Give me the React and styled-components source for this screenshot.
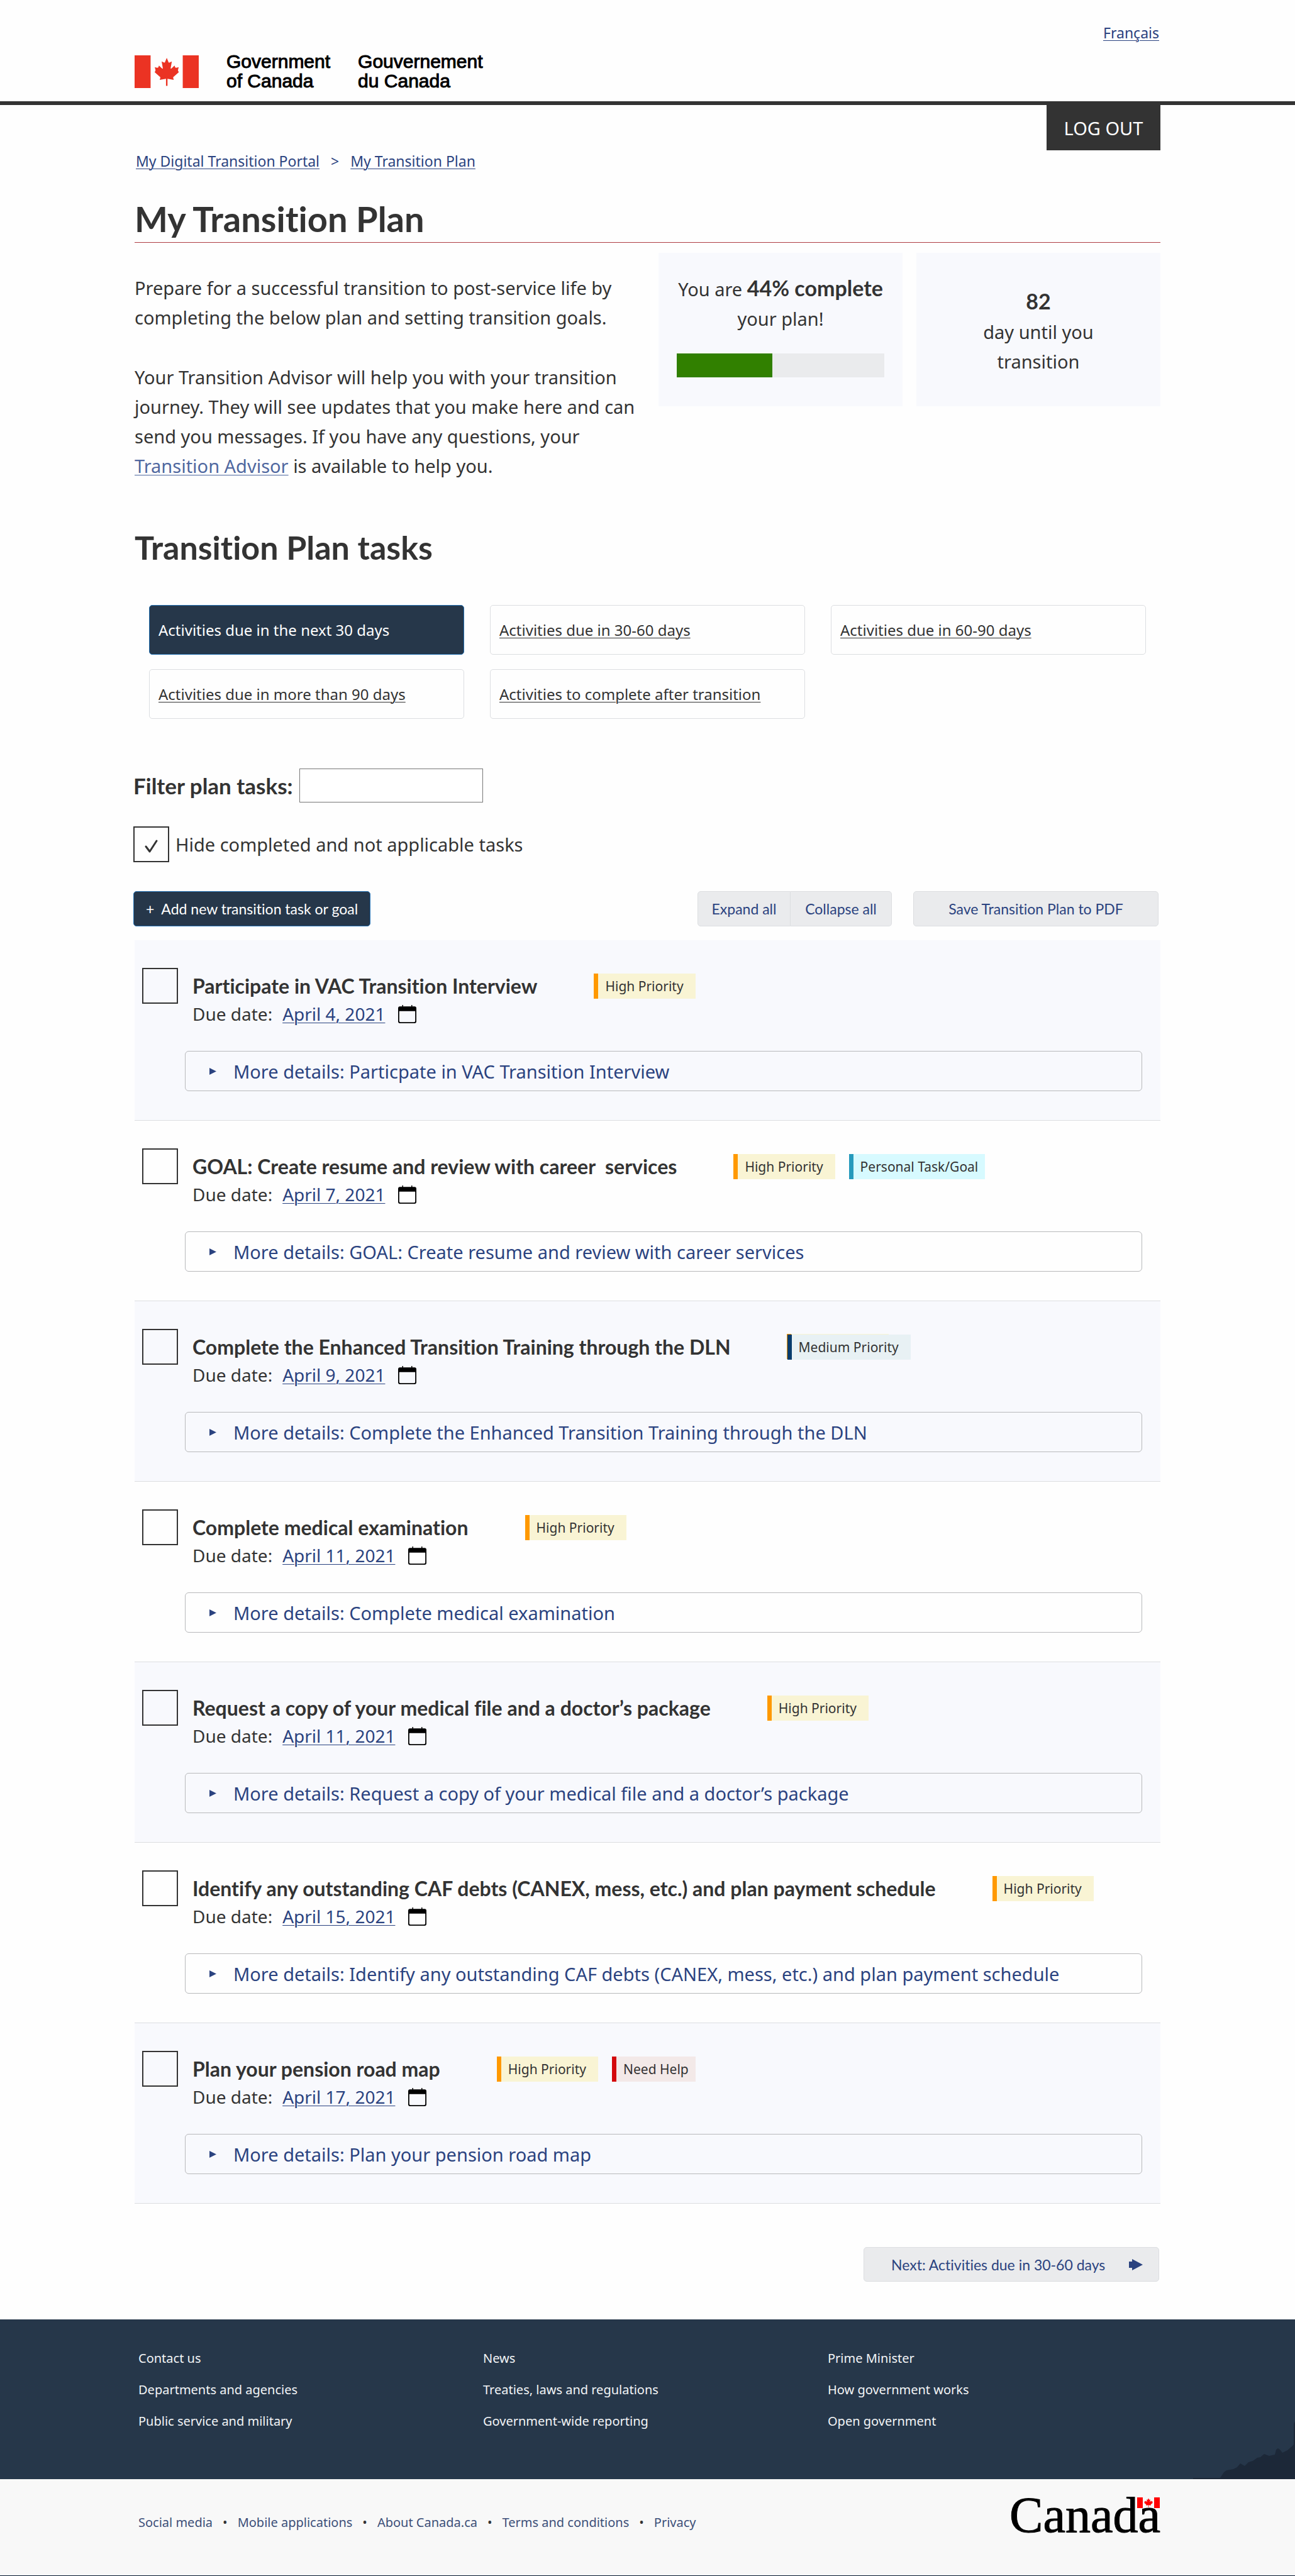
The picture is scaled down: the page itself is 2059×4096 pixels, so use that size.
import React, { useState } from "react";
import styled, { createGlobalStyle, css } from "styled-components";

const ink = "#333333";
const link = "#2b4380";
const navy = "#26374a";
const accent = "#2572b4";
const panel = "#f8f9fd";
const control = "#eaebed";
const hairline = "#dcdee1";
const body = '"Noto Sans", sans-serif';
const display = 'Lato, sans-serif';

const GlobalStyle = createGlobalStyle`
  *, *::before, *::after { box-sizing: border-box; }
  body {
    margin: 0;
    background: #fefefe;
    color: ${ink};
    font-family: ${body};
    font-size: 29px;
    font-variant-ligatures: none;
  }
  h1, h2, h3, p, ul { margin: 0; padding: 0; }
  ul { list-style: none; }
  button, input { font: inherit; color: inherit; font-variant-ligatures: none; }
  a { color: ${link}; text-decoration-thickness: 1px; text-underline-offset: 3px; }
`;

const Container = styled.div`
  width: 100%;
  max-width: 1631px;
  margin: 0 auto;
`;

/* Header */
const Masthead = styled.header`
  border-bottom: 6px solid ${ink};
`;
const MastheadInner = styled(Container)`
  display: grid;
  grid-template-rows: 88px 73px;
`;
const LanguageLink = styled.a`
  justify-self: end;
  margin: 36px 2px 0 0;
  font-size: 23px;
  line-height: 32px;
`;
const Brand = styled.div`
  display: flex;
  align-items: flex-start;
  gap: 44px;
`;
const BrandName = styled.span`
  font-family: "Liberation Sans", Arial, sans-serif;
  font-size: 30px;
  line-height: 31px;
  color: #000;
  -webkit-text-stroke: 1px #000;
  margin-top: -6px;
`;
const TopRow = styled(Container)`
  display: flex;
  justify-content: space-between;
  align-items: flex-start;
`;
const Breadcrumb = styled.nav`
  display: flex;
  gap: 18px;
  margin-top: 73px;
  padding-left: 2px;
  font-size: 23px;
  line-height: 32px;
  color: ${link};
`;
const LogOut = styled.button`
  width: 181px;
  height: 72px;
  border: 0;
  background: ${ink};
  color: #fff;
`;

/* Intro */
const PageTitle = styled.h1`
  margin-top: 41px;
  padding-bottom: 3px;
  border-bottom: 1px solid #af3c43;
  font-family: ${display};
  font-size: 56px;
  line-height: 69px;
`;
const Intro = styled.section`
  display: grid;
  grid-template-columns: minmax(0, 1fr) 388px 388px;
  column-gap: 22px;
  align-items: start;
  margin-top: 16px;
`;
const IntroText = styled.div`
  padding-top: 32px;
  line-height: 47px;
  p + p { margin-top: 48px; }
  a { color: #5068a0; }
`;
const StatCard = styled.div`
  height: 244px;
  padding: 34px 29px 0;
  background: ${panel};
  text-align: center;
  line-height: 47px;
  ${(p) => p.$centered && css`padding: 55px 100px 0;`}
  strong { font-family: ${display}; font-size: 34px; line-height: 34px; }
`;
const Meter = styled.div`
  height: 38px;
  margin-top: 32px;
  background: ${control};
`;
const MeterFill = styled.div`
  height: 100%;
  background: #318000;
`;
const SectionTitle = styled.h2`
  margin-top: 75px;
  font-family: ${display};
  font-size: 52px;
  line-height: 62px;
`;

/* Period tabs */
const Tabs = styled.nav`
  display: grid;
  grid-template-columns: repeat(3, minmax(0, 1fr));
  gap: 23px 41px;
  margin-top: 61px;
  padding: 0 23px;
`;
const Tab = styled.a`
  display: flex;
  align-items: center;
  height: 79px;
  padding: 0 14px;
  border: 1px solid ${hairline};
  border-radius: 5px;
  color: ${ink};
  font-size: 24px;
  ${(p) => p.$active && css`
    background: ${navy};
    border-color: ${accent};
    color: #fff;
    text-decoration: none;
  `}
`;

/* Filter and toolbar */
const Controls = styled.section`
  margin: 79px 3px 0 -2px;
`;
const FilterRow = styled.div`
  display: flex;
  align-items: center;
  gap: 10px;
`;
const FilterLabel = styled.label`
  font-family: ${display};
  font-size: 35px;
  font-weight: 700;
  line-height: 54px;
`;
const FilterInput = styled.input`
  width: 292px;
  height: 54px;
  border: 1px solid #777;
  background: #fff;
`;
const HideRow = styled.label`
  display: flex;
  align-items: center;
  gap: 10px;
  margin-top: 38px;
`;
const CheckWrap = styled.span`
  position: relative;
  display: block;
  width: 57px;
  height: 57px;
  flex: none;
  svg { position: absolute; left: 17px; top: 20px; pointer-events: none; }
`;
const Check = styled.input`
  appearance: none;
  display: block;
  width: 57px;
  height: 57px;
  margin: 0;
  border: 2px solid ${ink};
`;
const Toolbar = styled.div`
  display: flex;
  align-items: center;
  margin-top: 46px;
`;
const PrimaryButton = styled.button`
  display: flex;
  align-items: center;
  gap: 11px;
  height: 56px;
  margin-right: auto;
  padding: 0 19px;
  border: 1px solid ${accent};
  border-radius: 5px;
  background: ${navy};
  color: #fff;
  font-family: ${display};
  font-size: 23px;
`;
const SoftButton = styled.button`
  height: 56px;
  width: ${(p) => p.$width}px;
  padding: 0;
  border: 1px solid ${hairline};
  border-radius: 5px;
  background: ${control};
  color: ${link};
  font-family: ${display};
  font-size: 23px;
`;
const ButtonGroup = styled.div`
  display: flex;
  margin-right: 34px;
  ${SoftButton}:first-child { border-radius: 5px 0 0 5px; }
  ${SoftButton}:last-child { border-radius: 0 5px 5px 0; border-left: 0; }
`;

/* Tasks */
const TaskList = styled.ul`
  margin-top: 22px;
`;
const TaskItem = styled.li`
  display: grid;
  grid-template-columns: 57px minmax(0, 1fr);
  column-gap: 23px;
  height: 287px;
  padding: 44px 29px 0 12px;
  border-bottom: 1px solid ${hairline};
  &:nth-child(odd) { background: ${panel}; }
`;
const TaskHead = styled.div`
  display: flex;
  align-items: center;
  height: 57px;
`;
const TaskTitle = styled.h3`
  margin-right: 90px;
  font-family: ${display};
  font-size: 32px;
  line-height: 40px;
  white-space: pre-wrap;
`;
const tones = {
  high: ["#ff9900", "#f9f4d4"],
  medium: ["#083c6c", "#e8f1f4"],
  personal: ["#269abc", "#d7faff"],
  help: ["#d3080c", "#f3e9e8"],
};
const Badge = styled.span`
  position: relative;
  z-index: 0;
  height: 40px;
  margin-right: 22px;
  padding: 0 ${(p) => p.$tail}px 0 11px;
  border-left: 7px solid ${(p) => tones[p.$tone][0]};
  background: ${(p) => tones[p.$tone][1]};
  font-size: 21px;
  line-height: 40px;
  white-space: nowrap;
`;
const BadgeStack = styled.span`
  position: relative;
  display: flex;
  &::before {
    content: "";
    position: absolute;
    left: -1px;
    top: -1px;
    width: 162px;
    height: 40px;
    border-left: 7px solid ${tones.high[0]};
    background: ${tones.high[1]};
  }
`;
const Due = styled.div`
  display: flex;
  align-items: center;
  height: 38px;
  margin-top: -3px;
  font-size: 28px;
  line-height: 38px;
  a { margin: 0 21px 0 16px; }
`;
const Details = styled.button`
  display: flex;
  align-items: center;
  gap: 27px;
  width: calc(100% + 12px);
  height: 64px;
  margin: 40px 0 0 -12px;
  padding: 0 38px;
  border: 1px solid #b8b9bb;
  border-radius: 6px;
  background: transparent;
  color: ${link};
  text-align: left;
`;

const NextRow = styled.div`
  display: flex;
  justify-content: flex-end;
  margin: 69px 2px 60px 0;
`;
const NextLink = styled.a`
  display: flex;
  align-items: center;
  justify-content: space-between;
  width: 470px;
  height: 55px;
  padding: 0 25px 0 43px;
  border: 1px solid ${hairline};
  border-radius: 5px;
  background: ${control};
  font-family: ${display};
  font-size: 23px;
  text-decoration: none;
`;

/* Footer */
const FooterTop = styled.div`
  position: relative;
  height: 254px;
  background: ${navy};
`;
const Skyline = styled.svg`
  position: absolute;
  right: 0;
  bottom: 0;
`;
const FooterColumns = styled(Container)`
  display: grid;
  grid-template-columns: 548px 548px 1fr;
  padding: 37px 6px 0;
  a { color: #f2f4f6; font-size: 20px; line-height: 50px; text-decoration: none; }
`;
const FooterBottom = styled.div`
  height: 154px;
  border-bottom: 1px solid #061a30;
  background: #f8f8f8;
`;
const FooterBottomInner = styled(Container)`
  display: flex;
  justify-content: space-between;
  align-items: flex-start;
  padding-left: 6px;
`;
const FooterLinks = styled.ul`
  display: flex;
  padding-top: 55px;
  font-size: 20px;
  line-height: 28px;
  li + li::before { content: "•"; margin: 0 16px; color: ${ink}; }
  a { color: #3c4f78; text-decoration: none; }
`;
const Wordmark = styled.div`
  position: relative;
  margin-top: 12px;
  font-family: "Liberation Serif", "Times New Roman", serif;
  font-size: 80px;
  line-height: 90px;
  color: #000;
  -webkit-text-stroke: 1px #000;
  svg { position: absolute; right: 1px; top: 17px; }
`;

const LEAF =
  "M0 17L13 48Q16 49 34 40L26 86Q28 90 33 85L52 68L57 80Q60 84 80 78L75 98Q75 104 81 111L43 144Q42 148 47 162L5 155L5 201H-5L-5 155L-47 162Q-42 148 -43 144L-81 111Q-75 104 -75 98L-80 78Q-60 84 -57 80L-52 68L-33 85Q-28 90 -26 86L-34 40Q-16 49 -13 48Z";

function Flag({ width, height, color }) {
  return (
    <svg width={width} height={height} viewBox="0 0 429 216" preserveAspectRatio="none" aria-hidden="true">
      <path fill={color} d="M0 0h107v216H0zM322 0h107v216H322z" />
      <path fill={color} transform="translate(215 0)" d={LEAF} />
    </svg>
  );
}

function CalendarIcon() {
  return (
    <svg width="29" height="29" viewBox="0 0 40 40" aria-hidden="true">
      <path d="M9 0h2v4H9zM29 0h2v4h-2z" />
      <path fillRule="evenodd" d="M4 3h32a4 4 0 0 1 4 4v29a4 4 0 0 1-4 4H4a4 4 0 0 1-4-4V7a4 4 0 0 1 4-4zM2.500 13.500v21.500a2.500 2.500 0 0 0 2.500 2.500h30a2.500 2.500 0 0 0 2.500-2.500V13.500z" />
    </svg>
  );
}

const tabs = [
  "Activities due in the next 30 days",
  "Activities due in 30-60 days",
  "Activities due in 60-90 days",
  "Activities due in more than 90 days",
  "Activities to complete after transition",
];

const high = { tone: "high", text: "High Priority", tail: 19 };
const tasks = [
  { title: "Participate in VAC Transition Interview", details: "Particpate in VAC Transition Interview", due: "April 4, 2021", badges: [high] },
  {
    title: "GOAL: Create resume and review with career  services",
    details: "GOAL: Create resume and review with career services",
    due: "April 7, 2021",
    badges: [high, { tone: "personal", text: "Personal Task/Goal", tail: 11 }],
  },
  {
    title: "Complete the Enhanced Transition Training through the DLN",
    due: "April 9, 2021",
    badges: [{ tone: "medium", text: "Medium Priority", tail: 19, stacked: true }],
  },
  { title: "Complete medical examination", due: "April 11, 2021", badges: [high] },
  { title: "Request a copy of your medical file and a doctor’s package", due: "April 11, 2021", badges: [high] },
  { title: "Identify any outstanding CAF debts (CANEX, mess, etc.) and plan payment schedule", due: "April 15, 2021", badges: [high] },
  { title: "Plan your pension road map", due: "April 17, 2021", badges: [high, { tone: "help", text: "Need Help", tail: 11 }] },
];

function Task({ task }) {
  return (
    <TaskItem>
      <CheckWrap>
        <Check type="checkbox" aria-label={task.title} />
      </CheckWrap>
      <div>
        <TaskHead>
          <TaskTitle>{task.title}</TaskTitle>
          {task.badges.map((b) => {
            const badge = (
              <Badge key={b.text} $tone={b.tone} $tail={b.tail}>{b.text}</Badge>
            );
            return b.stacked ? <BadgeStack key={b.text}>{badge}</BadgeStack> : badge;
          })}
        </TaskHead>
        <Due>
          Due date: <a href="#due">{task.due}</a>
          <CalendarIcon />
        </Due>
        <Details type="button">
          <svg width="11" height="11" viewBox="0 0 11 11" aria-hidden="true">
            <path fill={link} d="M0 0L11 5.500L0 11z" />
          </svg>
          More details: {task.details || task.title}
        </Details>
      </div>
    </TaskItem>
  );
}

const footerColumns = [
  ["Contact us", "Departments and agencies", "Public service and military"],
  ["News", "Treaties, laws and regulations", "Government-wide reporting"],
  ["Prime Minister", "How government works", "Open government"],
];
const footerLinks = ["Social media", "Mobile applications", "About Canada.ca", "Terms and conditions", "Privacy"];

export default function App() {
  const [hide, setHide] = useState(true);
  const progress = 46;
  return (
    <>
      <GlobalStyle />
      <Masthead>
        <MastheadInner>
          <LanguageLink href="#fr" lang="fr">Français</LanguageLink>
          <Brand>
            <Flag width={102} height={52} color="#eb3323" />
            <BrandName>Government<br />of Canada</BrandName>
            <BrandName lang="fr">Gouvernement<br />du Canada</BrandName>
          </Brand>
        </MastheadInner>
      </Masthead>
      <TopRow>
        <Breadcrumb aria-label="Breadcrumb">
          <a href="#portal">My Digital Transition Portal</a>
          <span>&gt;</span>
          <a href="#plan">My Transition Plan</a>
        </Breadcrumb>
        <LogOut type="button">LOG OUT</LogOut>
      </TopRow>
      <Container as="main">
        <PageTitle>My Transition Plan</PageTitle>
        <Intro>
          <IntroText>
            <p>Prepare for a successful transition to post-service life by completing the below plan and setting transition goals.</p>
            <p>
              Your Transition Advisor will help you with your transition journey. They will see updates that you make here
              and can send you messages. If you have any questions, your <a href="#advisor">Transition Advisor</a> is
              available to help you.
            </p>
          </IntroText>
          <StatCard>
            <p>You are <strong>44% complete</strong> your plan!</p>
            <Meter role="progressbar" aria-label="Plan completion" aria-valuenow={44} aria-valuemin={0} aria-valuemax={100}>
              <MeterFill style={{ width: `${progress}%` }} />
            </Meter>
          </StatCard>
          <StatCard $centered>
            <p><strong>82</strong></p>
            <p>day until you transition</p>
          </StatCard>
        </Intro>
        <SectionTitle>Transition Plan tasks</SectionTitle>
        <Tabs aria-label="Activity periods">
          {tabs.map((t, i) => (
            <Tab key={t} href={`#period-${i}`} $active={i === 0}>{t}</Tab>
          ))}
        </Tabs>
        <Controls>
          <FilterRow>
            <FilterLabel htmlFor="filter">Filter plan tasks:</FilterLabel>
            <FilterInput id="filter" type="text" />
          </FilterRow>
          <HideRow>
            <CheckWrap>
              <Check type="checkbox" checked={hide} onChange={(e) => setHide(e.target.checked)} />
              {hide && (
                <svg width="24" height="24" viewBox="0 0 24 24" aria-hidden="true">
                  <path d="M3 12L9 20L20 3" fill="none" stroke={ink} strokeWidth="3" strokeLinecap="round" strokeLinejoin="round" />
                </svg>
              )}
            </CheckWrap>
            Hide completed and not applicable tasks
          </HideRow>
          <Toolbar>
            <PrimaryButton type="button"><span>+</span>Add new transition task or goal</PrimaryButton>
            <ButtonGroup>
              <SoftButton type="button" $width={148}>Expand all</SoftButton>
              <SoftButton type="button" $width={161}>Collapse all</SoftButton>
            </ButtonGroup>
            <SoftButton type="button" $width={390}>Save Transition Plan to PDF</SoftButton>
          </Toolbar>
        </Controls>
        <TaskList>
          {tasks.map((t) => <Task key={t.title} task={t} />)}
        </TaskList>
        <NextRow>
          <NextLink href="#next">
            Next: Activities due in 30-60 days
            <svg width="22" height="18" viewBox="0 0 22 18" aria-hidden="true">
              <path fill={link} d="M0 4h5V0l17 9L5 18v-4H0z" />
            </svg>
          </NextLink>
        </NextRow>
      </Container>
      <footer>
        <FooterTop>
          <FooterColumns>
            {footerColumns.map((col) => (
              <ul key={col[0]}>
                {col.map((t) => <li key={t}><a href="#footer">{t}</a></li>)}
              </ul>
            ))}
          </FooterColumns>
          <Skyline width="162" height="100" viewBox="0 0 162 100" aria-hidden="true">
            <path fill="#1c2838" d="M0 98H43L49 89L53 86L64 84L70 81L75 75L82 79L88 73L95 71L102 66L107 65L113 60L121 63L130 61L132 53L135 51L138 53L142 58L150 54L157 48L160 45V12L162 8V100H0Z" />
          </Skyline>
        </FooterTop>
        <FooterBottom>
          <FooterBottomInner>
            <FooterLinks>
              {footerLinks.map((t) => <li key={t}><a href="#footer">{t}</a></li>)}
            </FooterLinks>
            <Wordmark>
              Canada
              <Flag width={36} height={17} color="#ff0000" />
            </Wordmark>
          </FooterBottomInner>
        </FooterBottom>
      </footer>
    </>
  );
}
